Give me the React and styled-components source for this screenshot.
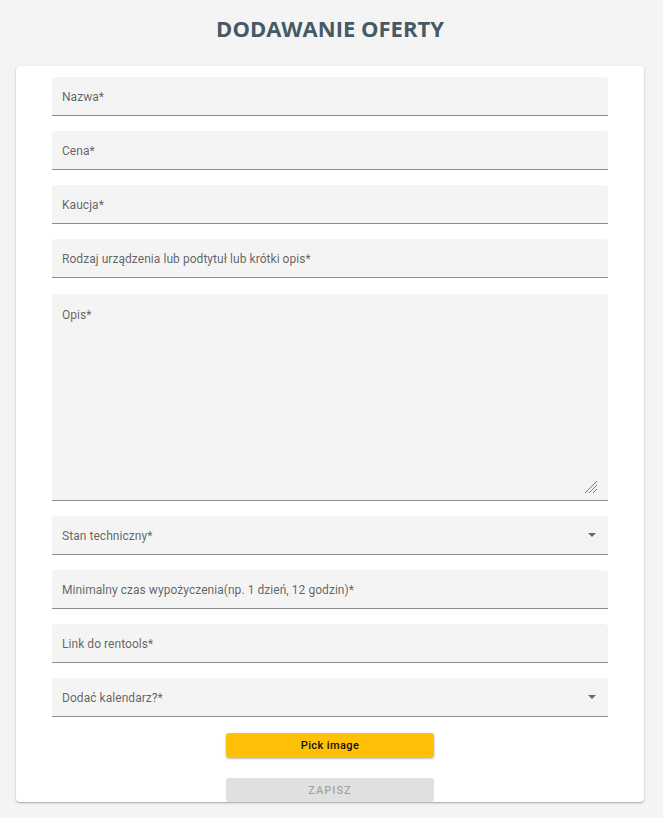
import React from 'react';
import styled, { createGlobalStyle } from 'styled-components';

const GlobalStyle = createGlobalStyle`
  html, body {
    margin: 0;
    padding: 0;
    background: #f4f4f4;
    font-family: Roboto, "Liberation Sans", sans-serif;
  }
  * { box-sizing: border-box; }
`;

const Page = styled.div`
  width: 663px;
  height: 818px;
  overflow: hidden;
  padding: 0 19px 0 16px;
`;

const Title = styled.h1`
  margin: 0;
  height: 66px;
  padding-bottom: 10px;
  display: flex;
  align-items: center;
  justify-content: center;
  font-family: "Open Sans", sans-serif;
  font-weight: 700;
  font-size: 22px;
  color: #455a64;
`;

const Card = styled.div`
  background: #fff;
  border-radius: 4px;
  box-shadow: 0 1px 3px rgba(0, 0, 0, 0.2), 0 1px 1px rgba(0, 0, 0, 0.14);
  padding: 11px 36px 0 36px;
  display: flex;
  flex-direction: column;
  gap: 15.15px;
`;

const Field = styled.div`
  position: relative;
  height: ${p => p.$h || 39}px;
  background: #f4f4f4;
  border-radius: 4px 4px 0 0;
  border-bottom: 1px solid #8c8c8c;
  padding: ${p => (p.$multi ? '14px' : '2px')} 10px 0 10px;
  display: flex;
  align-items: ${p => (p.$multi ? 'flex-start' : 'center')};
`;

const Label = styled.span`
  font-size: 12px;
  color: rgba(0, 0, 0, 0.62);
  letter-spacing: 0.05px;
`;

const Arrow = styled.div`
  position: absolute;
  right: 12px;
  top: 50%;
  margin-top: -2px;
  width: 0;
  height: 0;
  border-left: 4px solid transparent;
  border-right: 4px solid transparent;
  border-top: 4px solid #666;
`;

const Resize = styled.svg`
  position: absolute;
  right: 10px;
  bottom: 6px;
`;

const Buttons = styled.div`
  display: flex;
  flex-direction: column;
  align-items: center;
  gap: 21px;
  padding-top: 1px;
`;

const Button = styled.button`
  width: 208px;
  height: 24px;
  border: none;
  border-radius: 3px;
  font-family: Roboto, sans-serif;
  font-weight: 500;
  font-size: 11px;
  letter-spacing: ${p => (p.$disabled ? '1px' : '0.4px')};
  text-transform: ${p => (p.$disabled ? 'uppercase' : 'none')};
  background: ${p => (p.$disabled ? '#e0e0e0' : '#ffc107')};
  color: ${p => (p.$disabled ? 'rgba(0,0,0,0.3)' : '#111')};
  box-shadow: ${p => (p.$disabled ? 'none' : '0 2px 2px rgba(0,0,0,0.2), 0 1px 3px rgba(0,0,0,0.12)')};
`;

const fields = [
  { label: 'Nazwa*' },
  { label: 'Cena*' },
  { label: 'Kaucja*' },
  { label: 'Rodzaj urządzenia lub podtytuł lub krótki opis*' },
  { label: 'Opis*', multi: true, h: 207 },
  { label: 'Stan techniczny*', select: true },
  { label: 'Minimalny czas wypożyczenia(np. 1 dzień, 12 godzin)*' },
  { label: 'Link do rentools*' },
  { label: 'Dodać kalendarz?*', select: true },
];

export default function App() {
  return (
    <Page>
      <GlobalStyle />
      <Title>DODAWANIE OFERTY</Title>
      <Card>
        {fields.map(f => (
          <Field key={f.label} $h={f.h} $multi={f.multi}>
            <Label>{f.label}</Label>
            {f.select && <Arrow />}
            {f.multi && (
              <Resize width="14" height="14" viewBox="0 0 14 14">
                <g stroke="#777" strokeWidth="1">
                  <line x1="1" y1="13" x2="13" y2="1" />
                  <line x1="5" y1="13" x2="13" y2="5" />
                  <line x1="9" y1="13" x2="13" y2="9" />
                </g>
              </Resize>
            )}
          </Field>
        ))}
        <Buttons>
          <Button>Pick image</Button>
          <Button $disabled>Zapisz</Button>
        </Buttons>
      </Card>
    </Page>
  );
}
